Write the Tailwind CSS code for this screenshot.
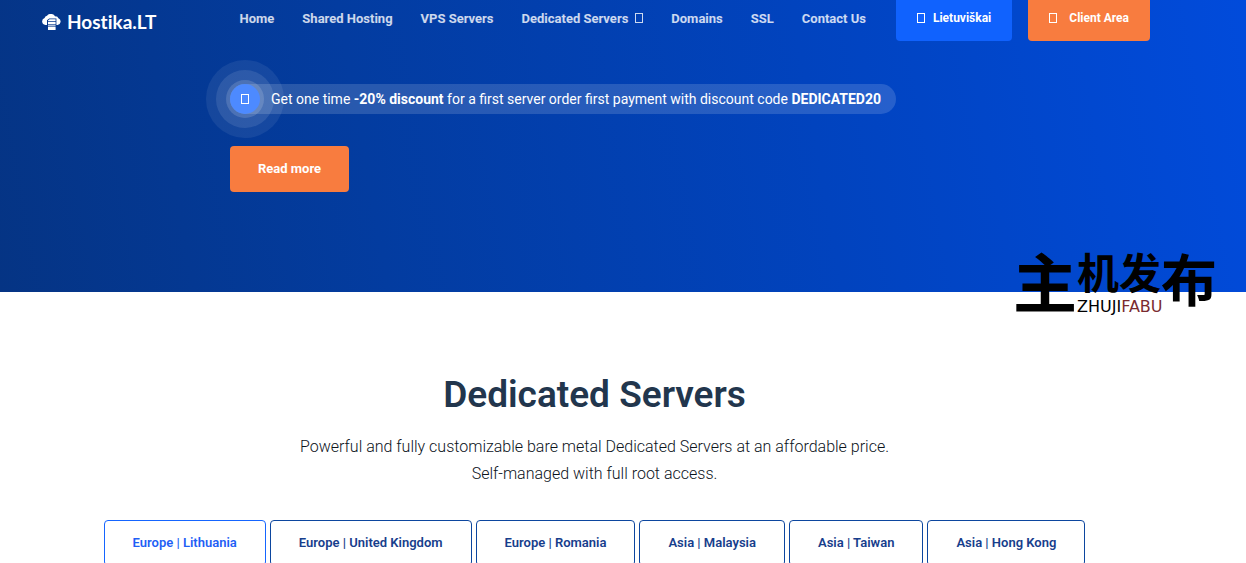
<!DOCTYPE html>
<html lang="en">
<head>
  <meta charset="UTF-8" />
  <meta name="viewport" content="width=device-width, initial-scale=1.0"/>
  <title>Hostika.LT - Dedicated Servers</title>
  <script src="https://cdn.jsdelivr.net/npm/@tailwindcss/browser@4"></script>
</head>
<body class="relative bg-white font-['Roboto',sans-serif] text-[#22364d] overflow-x-hidden">
  <section class="bg-[linear-gradient(80deg,#053484_0%,#033ca0_30%,#0143be_65%,#014bdb_100%)] text-white pb-[100px]">
    <!-- Header -->
    <header class="flex items-start justify-between pl-[42px] pr-24">
      <a href="#" class="flex items-center gap-1.5 pt-2.5 text-[19px] leading-6 font-bold font-['Lato',sans-serif] [font-variant-ligatures:none]">
        <svg class="w-[19px] h-4" viewBox="0 0 19 16" fill="currentColor" aria-hidden="true">
          <path d="M5 11H3.4A3.6 3.6 0 0 1 2.6 4 3 3 0 0 1 5 1.7 5 5 0 0 1 13.2 2.4 3 3 0 0 1 16.4 4.3 3.5 3.5 0 0 1 15.6 11H14.4V4.4H7.2L5 6.3z"/>
          <path d="M7.6 5.2h6v2H6v-.6zM6 8.1h7.6v2.1H6zM6 13.1h7.6V16H6z"/>
          <path opacity=".7" d="M6 10.8h7.6v1.8H6z"/>
        </svg>
        Hostika.LT
      </a>
      <div class="flex items-start gap-[30px] whitespace-nowrap">
        <nav class="flex gap-7 pt-2 text-[13px] leading-[21px] font-bold text-white/80">
          <a href="#">Home</a>
          <a href="#">Shared Hosting</a>
          <a href="#">VPS Servers</a>
          <a href="#" class="flex gap-[7px]">Dedicated Servers <span class="mt-[5px] w-2 h-2.5 border border-current"></span></a>
          <a href="#">Domains</a>
          <a href="#">SSL</a>
          <a href="#">Contact Us</a>
        </nav>
        <div class="flex gap-4 text-xs leading-[21px] font-bold">
          <a href="#" class="flex gap-2 rounded-b bg-[#1062fe] px-[21px] pt-2 pb-3"><span class="mt-[5px] w-2 h-2.5 border border-current"></span>Lietuviškai</a>
          <a href="#" class="flex gap-3 rounded-b bg-[#f87c3f] px-[21px] pt-2 pb-3"><span class="mt-[5px] w-2 h-2.5 border border-current"></span>Client Area</a>
        </div>
      </div>
    </header>

    <!-- Promo -->
    <div class="pl-[230px] pt-[43px] flex flex-col items-start gap-8">
      <div class="flex items-center gap-[11px] h-[30px] rounded-full bg-white/15 pr-[15px] text-sm">
        <span class="relative flex items-center justify-center size-[30px]">
          <span class="absolute -inset-6 rounded-full bg-white/7"></span>
          <span class="absolute -inset-3.5 rounded-full bg-white/10"></span>
          <span class="absolute -inset-1 rounded-full bg-white/15"></span>
          <span class="absolute inset-0 rounded-full bg-[#4d8aff]"></span>
          <span class="relative w-2 h-2.5 border border-white"></span>
        </span>
        <p>Get one time <b>-20% discount</b> for a first server order first payment with discount code <b>DEDICATED20</b></p>
      </div>
      <a href="#" class="rounded bg-[#f87c3f] px-7 py-3 text-[13px] leading-[22px] font-bold">Read more</a>
    </div>
  </section>

  <!-- Servers -->
  <section class="pt-[81px] pr-[57px] text-center">
    <h1 class="text-[37px] leading-[44px] font-semibold">Dedicated Servers</h1>
    <p class="mt-4 text-base leading-[27px] font-light text-[#0c131b]">Powerful and fully customizable bare metal Dedicated Servers at an affordable price.<br>Self-managed with full root access.</p>
    <div class="mt-[33px] flex justify-center gap-1 h-[43px] overflow-hidden whitespace-nowrap text-[13px] font-semibold text-[#173e8c]">
      <button class="h-[46px] rounded border border-[#1565ff] px-7 text-[#1f5ff5]">Europe | Lithuania</button>
      <button class="h-[46px] rounded border border-[#0c469f] px-7">Europe | United Kingdom</button>
      <button class="h-[46px] rounded border border-[#0c469f] px-7">Europe | Romania</button>
      <button class="h-[46px] rounded border border-[#0c469f] px-7">Asia | Malaysia</button>
      <button class="h-[46px] rounded border border-[#0c469f] px-7">Asia | Taiwan</button>
      <button class="h-[46px] rounded border border-[#0c469f] px-7">Asia | Hong Kong</button>
    </div>
  </section>

  <!-- Watermark over the hero edge -->
  <div class="absolute top-[247px] right-[29px] flex items-start text-black font-bold font-['Noto_Sans_CJK_SC',sans-serif]">
    <span class="text-[64px] leading-[64px]">主</span>
    <div class="w-[84px] whitespace-nowrap">
      <div class="text-[42px] leading-[48px]">机发</div>
      <div class="font-['DejaVu_Sans',sans-serif] font-normal text-base leading-6">ZHUJI<span class="text-[#7a2b30]">FABU</span></div>
    </div>
    <span class="text-[56px] leading-[60px]">布</span>
  </div>
</body>
</html>
